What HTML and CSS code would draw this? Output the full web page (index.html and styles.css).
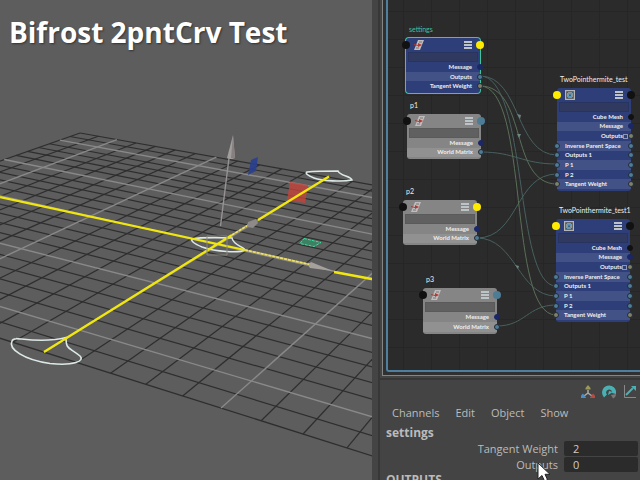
FILE: index.html
```
<!DOCTYPE html>
<html lang="en">
<head>
<meta charset="utf-8">
<title>Bifrost 2pntCrv Test</title>
<link rel="stylesheet" href="styles.css">
</head>
<body>
<main class="app">
  <section class="viewport">
    <svg class="scene" viewBox="0 0 372 480" preserveAspectRatio="xMinYMin slice" aria-hidden="true">
      <g id="minor" stroke="#2e2e2e" stroke-width="1.2"></g>
      <g id="major" stroke="#898989" stroke-width="1.4"></g>
      <g fill="none" stroke="#dce8e6" stroke-width="1.6">
        <path d="M16 338.500C24 339 45 343 66 337.500C66 350 69 347 80 356C85 361 74 366 50 363.500C24 360 8 349 12 341Q13 338 19 339"/>
        <path d="M192 239Q202 237 232 238C233 245 244 247 245 250C240 253 216 252 202 247Q190 242 192 239Z"/>
        <path d="M307 172Q316 171 338 171C340 176 351 176 352 180C343 182 322 181 314 178Q304 174 307 172Z"/>
      </g>
      <path d="M290 182l18 3-3 18-18-3z" fill="#c4443b" fill-opacity=".8"/>
      <path d="M251 160l7-3-2 14-8 4z" fill="#293f91" fill-opacity=".9"/>
      <path d="M304 238.500l17 4-7 4-14-3z" fill="#3c8163" stroke="#3fdc9c" stroke-dasharray="3 1"/>
      <g fill="none" stroke="#f1e70d" stroke-width="2.3">
        <path d="M0 197L245 250M334 272L372 279M44 352L232 235M258 220L329 176.500"/>
      </g>
      <path d="M232 235L250 224M245 250L312 265" stroke="#aaa26b" stroke-width="2"/>
      <path d="M232 235L250 224M245 250L312 265" stroke="#eee16b" stroke-width="1.600" stroke-dasharray="3 1"/>
      <path d="M220.500 226L229 158" stroke="#979293" stroke-width="1.400"/>
      <path d="M227 158L233 135 235 158Q231 160 227 158Z" fill="#a39e9e"/>
      <path d="M231 158L233 135 235 158Z" fill="#87807f"/>
      <path d="M311 262L333 271 310 268Q307 265 311 262Z" fill="#a7a19e"/>
      <path d="M248 222l8-3 2 4-5 5-6-1z" fill="#8d8a87"/>
      <path d="M207 236h20v19h-20z" fill="none" stroke="#88867a"/>
    </svg>
    <h1 class="title">Bifrost 2pntCrv Test</h1>
  </section>
  <div class="side">
    <section class="editor">
      <div class="canvas">
        <svg class="wires" viewBox="0 0 252 370" aria-hidden="true">
          <g fill="none" stroke="#47605f">
            <path d="M92 76C133 76 127 155 169 155"/>
            <path d="M92 76C140 76 126 286 168 286"/>
            <path d="M93 152C127 152 134 164 169 164"/>
            <path d="M89 238C131 238 127 174 169 174"/>
            <path d="M89 238C128 238 130 296 168 296"/>
            <path d="M109 326C137 326 140 305 168 305"/>
          </g>
          <g fill="none" stroke="#5b6f58">
            <path d="M92 86C140 86 121 184 169 184"/>
            <path d="M92 86C142 86 119 315 168 315"/>
          </g>
          <g fill="#6d8680">
            <path d="M129 114l4 1-1 4zM129 134l4 0-2 4zM127 265l4 1-1 3z"/>
          </g>
        </svg>
      </div>
    </section>
    <section class="channels">
      <div class="tools">
        <button class="tool" type="button" aria-label="Manipulator"><svg viewBox="0 0 14 14"><path d="M7 5v4M7 8l-4 3M7 8l4 3" stroke="#aaa" stroke-width="1.500"/><path d="M4.500 4.500V3L7 0l2.500 3v1.500z" fill="#9c9a54"/><path d="M0 13V10.500L2 8.500L5 12.500V13z" fill="#4b8fc8"/><path d="M14 13V10.500l-2-2-3 4V13z" fill="#b84a3f"/></svg></button>
        <button class="tool" type="button" aria-label="Speed"><svg viewBox="0 0 14 14"><path d="M3.500 11A5 5 0 1 1 12 8.500" fill="none" stroke="#4bb0b3" stroke-width="4"/><path d="M6 10l1-4 4 1z" fill="#4bb0b3"/><path d="M9 10l5-1q0 3-3 4.500z" fill="#777"/></svg></button>
        <button class="tool" type="button" aria-label="Graph"><svg viewBox="0 0 14 14"><path d="M1.500 0v12.500H13" fill="none" stroke="#888"/><path d="M3 10L10 3" stroke="#4bb0b3" stroke-width="2"/><path d="M8 1h5v5z" fill="#4bb0b3"/></svg></button>
      </div>
      <nav class="menu">
        <button type="button">Channels</button>
        <button type="button">Edit</button>
        <button type="button">Object</button>
        <button type="button">Show</button>
      </nav>
      <h2 class="heading">settings</h2>
      <div class="field"><label for="weight">Tangent Weight</label><input id="weight" value="2"></div>
      <div class="field"><label for="outputs">Outputs</label><input id="outputs" value="0"></div>
      <h2 class="heading">OUTPUTS</h2>
      <svg class="pointer" viewBox="0 0 14 20" aria-hidden="true"><path d="M1 1v16l4-3.500 2.500 5.500 3-1.300L8 12.300h5z" fill="#fff" stroke="#222"/></svg>
    </section>
  </div>
</main>
<script src="scene.js"></script>
</body>
</html>
```
FILE: styles.css
```
* { box-sizing: border-box; }

body {
  margin: 0;
  background: #444;
  color: #bbb;
  font: 11px/16px "Open Sans", "Noto Sans", sans-serif;
}

button, input {
  border: 0;
  padding: 0;
  background: none;
  color: inherit;
  font: inherit;
}

h1, h2 { margin: 0; }

.app {
  display: grid;
  grid-template-columns: 372fr 268fr;
  height: 100vh;
  overflow: hidden;
}

.viewport {
  display: grid;
  min-height: 0;
  background: #5d5d5d;
}

.scene, .title { grid-area: 1 / 1; }

.scene {
  width: 100%;
  height: 100vh;
}

.title {
  padding: 13px 9px;
  color: #fff;
  font: bold 28px/38px "Open Sans", "Noto Sans", sans-serif;
  white-space: nowrap;
  text-shadow: 1px 1px 2px #333;
  z-index: 1;
}

.side {
  display: flex;
  flex-direction: column;
  min-width: 0;
  height: 100vh;
  margin-left: 6px;
  border-left: 2px solid #373737;
}

.editor {
  flex: 1;
  min-height: 0;
  margin: 0 0 2px 2px;
  padding: 0 0 3px 3px;
  border: solid #858585;
  border-width: 0 0 1px 1px;
  background: #303030;
}

.canvas {
  position: relative;
  height: 100%;
  overflow: hidden;
  border: solid #4f7f9f;
  border-width: 0 0 2px 2px;
  border-radius: 0 0 0 3px;
  background-color: #2b2b2b;
  background-image:
    linear-gradient(90deg, #262626 1px, transparent 1px),
    linear-gradient(#262626 1px, transparent 1px);
  background-size: 28px 28px;
  background-position: 15px 11px;
}

.wires {
  display: block;
  width: 252px;
  height: 370px;
}

.node {
  position: absolute;
  display: flex;
  flex-direction: column;
  width: 74px;
  border-radius: 3px;
  background: #858585;
  color: #eee;
  font: bold 6px/8px Lato, "Open Sans", sans-serif;
  white-space: nowrap;
}

.node.blue { background: #2d3e79; }
.node.selected { box-shadow: 0 0 0 1px #40c49e; }

.name {
  position: absolute;
  left: 3px;
  top: -14px;
  font-size: 7px;
  font-weight: 400;
  line-height: 10px;
}

.selected .name { color: #40c49e; }

.head {
  display: flex;
  justify-content: space-between;
  padding: 2px 7px 2px 8px;
}

.head svg {
  width: 10px;
  height: 10px;
}

.search {
  height: 10px;
  margin: 0 2px;
  border: 1px solid #5a5a5a;
  background: #606060;
}

.blue .search {
  border-color: #27345f;
  background: #303a60;
}

.rows {
  display: flex;
  flex: 1;
  flex-direction: column;
  margin: 0 0 2px;
  padding: 0;
  list-style: none;
}

.row {
  position: relative;
  display: flex;
  flex: 1;
  align-items: center;
  justify-content: flex-end;
  padding: 0 8px;
}

.row.input { justify-content: flex-start; }
.row:nth-child(even) { background: rgb(255 255 255 / 10%); }

.row .plus {
  width: 5px;
  height: 5px;
  margin-right: -5px;
  border: 1px solid #8d96b5;
}

.port {
  position: absolute;
  top: 50%;
  right: -3px;
  width: 6px;
  height: 6px;
  border: 1px solid #222b38;
  border-radius: 50%;
  background: #4d7c94;
  transform: translateY(-50%);
}

.port.left { right: auto; left: -3px; }
.port.navy { background: #1b2766; border-color: #1b2766; }
.port.olive { background: #7f8068; }
.port.black { background: #111; border-color: #111; }

.port.big {
  top: 7px;
  right: -4px;
  width: 8px;
  height: 8px;
  border: 0;
}

.port.big.left { left: -4px; right: auto; }
.port.big.yellow { background: #ffeb00; }

.channels {
  position: relative;
  height: 102px;
  overflow: hidden;
  border-top: 2px solid #373737;
  padding-top: 5px;
}

.tools {
  display: flex;
  justify-content: flex-end;
  gap: 7px;
  padding-right: 3px;
}

.tool {
  width: 14px;
  height: 14px;
}

.tool svg { display: block; }

.menu {
  display: flex;
  gap: 16px;
  padding: 5px 12px 4px;
}

.menu button { line-height: 18px; }

.heading {
  padding-left: 6px;
  font-size: 12px;
  line-height: 14px;
}

.field {
  display: flex;
  gap: 6px;
  margin-top: 1px;
  padding-right: 2px;
}

.field + .field { margin-top: 0; }

.field label {
  flex: 1;
  line-height: 16px;
  text-align: right;
}

.field input {
  width: 74px;
  height: 15px;
  padding: 0 9px;
  border-radius: 2px;
  background: #2b2b2b;
  color: #ccc;
}

.pointer {
  position: absolute;
  left: 157px;
  top: 82px;
  width: 14px;
  height: 20px;
}
```
FILE: scene.js
```
// Ground plane: 24 x 24 units in perspective, heavier line every five units.
const SVG = "http://www.w3.org/2000/svg";
const project = (u, v) => {
  const w = 1 - 0.01518 * u - 0.0187 * v;
  return [(218 + 24.1 * u - 15.32 * v) / w, (245 + 2.48 * u + 2.345 * v) / w];
};
const addLine = (from, to, major) => {
  const line = document.createElementNS(SVG, "line");
  line.setAttribute("x1", from[0]);
  line.setAttribute("y1", from[1]);
  line.setAttribute("x2", to[0]);
  line.setAttribute("y2", to[1]);
  document.getElementById(major ? "major" : "minor").append(line);
};
for (let i = -12; i <= 12; i++) {
  addLine(project(i, -12), project(i, 12), i % 5 === 0);
  addLine(project(-12, i), project(12, i), i % 5 === 0);
}

// Node graph. Rows: [label, right port, left port]
const listIcon = '<svg viewBox="0 0 10 10"><path d="M1 1h8v2H1zM1 4h8v2H1zM1 7h8v2H1z" fill="#bcc4c8"/></svg>';
const transformIcon = '<svg viewBox="0 0 10 10"><path d="M4 0h6L6 10H0z" fill="#c0bcbb"/><path d="M5 2h3M2 8h3" stroke="#777"/><path d="M0 4l4 1V3l4 2-4 2V6L0 5z" fill="#b03a35"/></svg>';
const graphIcon = '<svg viewBox="0 0 10 10"><path d="M0 0h10v10H0z" fill="#b4b5b4"/><path d="M1.500 1.500h7v7h-7z" fill="#8e9597" stroke="#666"/><path d="M2 2l6 6M2 8l6-6" stroke="#37617f"/><path d="M3 3h4v1.500H3zM3 6h4v1.500H3z" fill="#5796c0"/></svg>';
const plainRows = [["Message", "navy"], ["World Matrix", "teal"]];
const graphRows = [
  ["Cube Mesh", "black"], ["Message", "navy"], ["Outputs", "olive"],
  ["Inverse Parent Space", "teal", "teal"], ["Outputs 1", "teal", "teal"],
  ["P 1", "teal", "teal"], ["P 2", "teal", "teal"], ["Tangent Weight", "olive", "olive"]
];
const nodes = [
  { name: "settings", x: 18, y: 38, h: 55, kind: "blue selected", ports: ["black", "yellow"],
    rows: [["Message", "navy"], ["Outputs", "teal"], ["Tangent Weight", "olive"]] },
  { name: "p1", x: 19, y: 114, h: 45, kind: "plain", ports: ["black", "teal"], rows: plainRows },
  { name: "p2", x: 15, y: 200, h: 45, kind: "plain", ports: ["black", "yellow"], rows: plainRows },
  { name: "p3", x: 35, y: 288, h: 46, kind: "plain", ports: ["black", "teal"], rows: plainRows },
  { name: "TwoPointhermite_test", x: 169, y: 88, h: 103, kind: "blue", ports: ["yellow", "black"], rows: graphRows },
  { name: "TwoPointhermite_test1", x: 168, y: 219, h: 103, kind: "blue", ports: ["yellow", "black"], rows: graphRows }
];
const canvas = document.querySelector(".canvas");
for (const n of nodes) {
  const isGraph = n.rows === graphRows;
  const el = document.createElement("article");
  el.className = `node ${n.kind}`;
  el.style.cssText = `left:${n.x}px;top:${n.y}px;height:${n.h}px`;
  el.innerHTML = `<span class="name">${n.name}</span>
    <i class="port big left ${n.ports[0]}"></i><i class="port big ${n.ports[1]}"></i>
    <div class="head">${isGraph ? graphIcon : transformIcon}${listIcon}</div>
    <div class="search"></div>
    <ul class="rows">${n.rows.map(([label, right, left]) =>
      `<li class="row ${left ? "input" : ""}">${label}${isGraph && label === "Outputs" ? '<i class="plus"></i>' : ""}
      ${left ? `<i class="port left ${left}"></i>` : ""}<i class="port ${right}"></i></li>`).join("")}</ul>`;
  canvas.append(el);
}
```
